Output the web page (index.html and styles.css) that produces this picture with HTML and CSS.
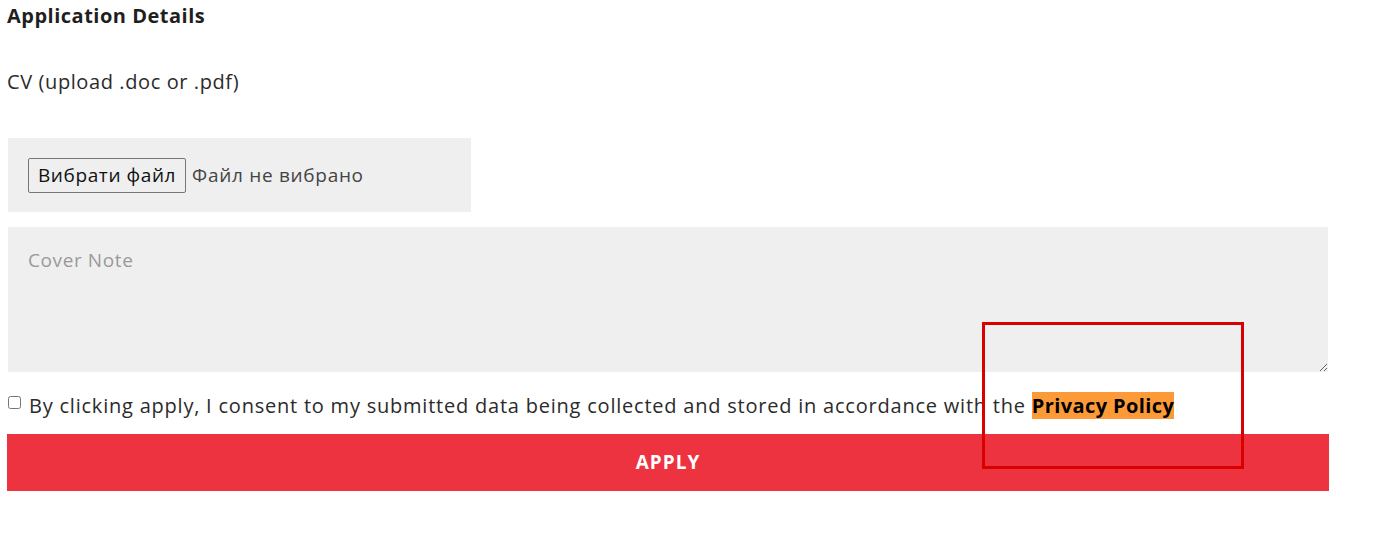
FILE: index.html
```html
<!DOCTYPE html>
<html lang="uk">
<head>
<meta charset="utf-8">
<title>Application Details</title>
<link rel="stylesheet" href="styles.css">
</head>
<body>
<form class="form">
  <h3 class="title">Application Details</h3>
  <p class="label">CV (upload .doc or .pdf)</p>
  <div class="file-box">
    <button type="button" class="file-btn">Вибрати файл</button>
    <span class="file-name">Файл не вибрано</span>
  </div>
  <textarea class="note" placeholder="Cover Note"></textarea>
  <label class="consent">
    <input type="checkbox" class="check">
    <span>By clicking apply, I consent to my submitted data being collected and stored in accordance with the <a class="policy" href="#">Privacy Policy</a></span>
  </label>
  <button type="button" class="apply">APPLY</button>
</form>
<div class="highlight"></div>
</body>
</html>
```
FILE: styles.css
```css
html, body {
  margin: 0;
  padding: 0;
  background: #fff;
}
body {
  font-family: "Open Sans", "Noto Sans", sans-serif;
  color: #2b2b2b;
  position: relative;
}
.form {
  width: 1321px;
  padding: 0 0 0 7px;
  display: flex;
  flex-direction: column;
}
.title {
  margin: 4px 0 0 0;
  font-size: 20px;
  font-weight: 700;
  line-height: 24px;
  letter-spacing: 0.5px;
  color: #1f1f1f;
}
.label {
  margin: 42px 0 0 0;
  font-size: 20px;
  line-height: 24px;
  letter-spacing: 0.6px;
}
.file-box {
  margin: 44px 0 0 1px;
  width: 423px;
  height: 74px;
  padding: 0 20px;
  background: #efefef;
  display: flex;
  align-items: center;
  gap: 6px;
}
.file-btn {
  font-family: "Open Sans", "Noto Sans", sans-serif;
  font-size: 19px;
  letter-spacing: 0.6px;
  color: #111;
  background: #efefef;
  border: 1px solid #767676;
  border-radius: 2px;
  height: 35px;
  padding: 0 9px;
}
.file-name {
  font-size: 19px;
  letter-spacing: 0.7px;
  color: #444;
}
.note {
  margin: 15px 0 0 1px;
  width: 1320px;
  height: 145px;
  box-sizing: border-box;
  border: none;
  background: #efefef;
  padding: 20px 20px;
  font-family: "Open Sans", "Noto Sans", sans-serif;
  font-size: 19px;
  letter-spacing: 0.6px;
  color: #333;
  resize: vertical;
  outline: none;
}
.note::placeholder {
  color: #9a9a9a;
}
.consent {
  margin: 22px 0 0 0;
  display: flex;
  align-items: flex-start;
  gap: 8px;
  font-size: 20px;
  line-height: 24px;
  letter-spacing: 0.78px;
}
.check {
  margin: 2px 0 0 1px;
  width: 13px;
  height: 13px;
}
.policy {
  background: #fd9a38;
  color: #000;
  font-weight: 700;
  letter-spacing: 0.4px;
  text-decoration: none;
}
.apply {
  margin: 16px 0 0 0;
  width: 1322px;
  height: 57px;
  border: none;
  background: #ee3340;
  color: #fff;
  font-family: "Open Sans", "Noto Sans", sans-serif;
  font-weight: 700;
  font-size: 19px;
  letter-spacing: 1px;
  padding-bottom: 2px;
}
.highlight {
  position: absolute;
  left: 982px;
  top: 322px;
  width: 256px;
  height: 141px;
  border: 3px solid #d90000;
  pointer-events: none;
}
```
